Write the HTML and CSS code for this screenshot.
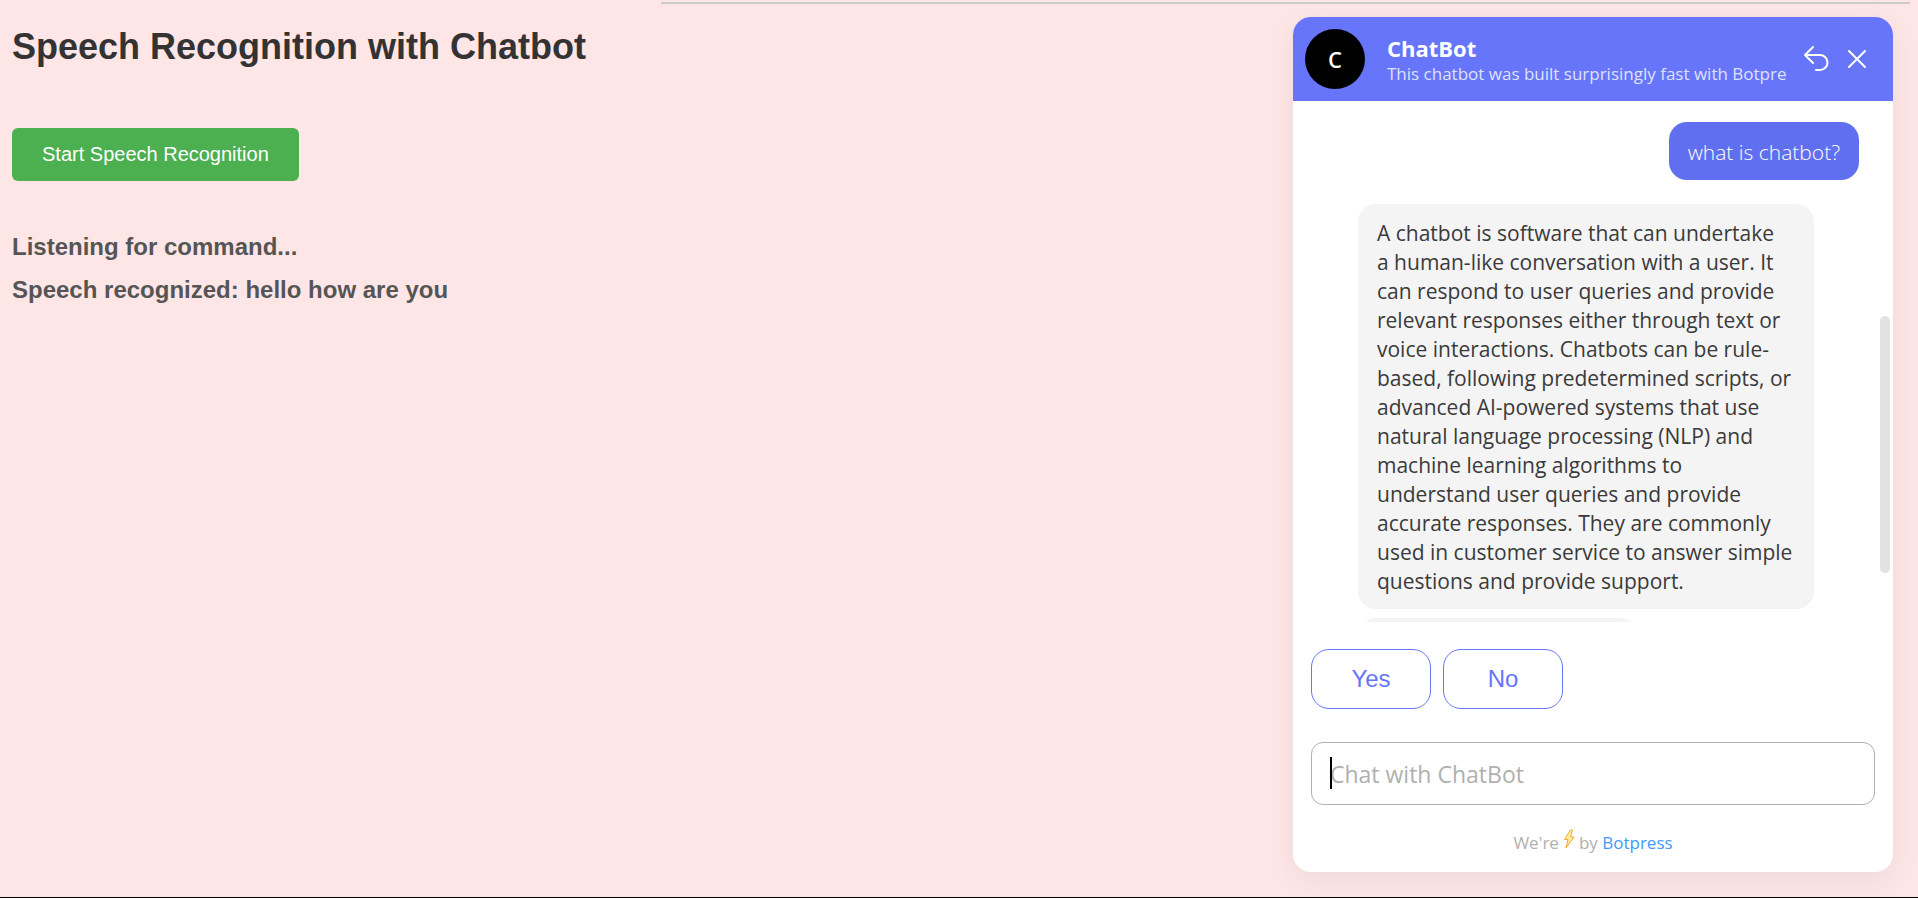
FILE: index.html
```html
<!DOCTYPE html>
<html lang="en">
<head>
<meta charset="utf-8">
<title>Speech Recognition with Chatbot</title>
<link rel="stylesheet" href="styles.css">
</head>
<body>
<div class="page">
  <main class="speech">
    <h1 class="title">Speech Recognition with Chatbot</h1>
    <button class="start" type="button">Start Speech Recognition</button>
    <h3 class="status">Listening for command...</h3>
    <h3 class="status">Speech recognized: hello how are you</h3>
  </main>
  <div class="stage">
    <aside class="chat">
      <header class="chat-header">
        <div class="avatar">C</div>
        <div class="identity">
          <h2 class="name">ChatBot</h2>
          <p class="tagline">This chatbot was built surprisingly fast with Botpre</p>
        </div>
        <button class="icon-button" type="button" aria-label="Restart conversation">
          <svg width="26" height="26" viewBox="0 0 26 26"><path d="M9 1 1 9l8 8M1 9h15a7.500 7.500 0 0 1 0 15h-4"/></svg>
        </button>
        <button class="icon-button" type="button" aria-label="Close">
          <svg width="18" height="18" viewBox="0 0 18 18"><path d="M1 1l16 16M17 1 1 17"/></svg>
        </button>
      </header>
      <div class="messages">
        <p class="bubble user">what is chatbot?</p>
        <div class="replies">
          <p class="bubble bot">A chatbot is software that can undertake<br>a human-like conversation with a user. It<br>can respond to user queries and provide<br>relevant responses either through text or<br>voice interactions. Chatbots can be rule-<br>based, following predetermined scripts, or<br>advanced AI-powered systems that use<br>natural language processing (NLP) and<br>machine learning algorithms to<br>understand user queries and provide<br>accurate responses. They are commonly<br>used in customer service to answer simple<br>questions and provide support.</p>
          <div class="bubble bot next"></div>
        </div>
        <span class="scroll-thumb"></span>
      </div>
      <div class="choices">
        <button class="choice" type="button">Yes</button>
        <button class="choice" type="button">No</button>
      </div>
      <div class="composer">
        <input class="composer-input" type="text" aria-label="Message" placeholder="Chat with ChatBot">
        <span class="caret"></span>
      </div>
      <footer class="credit">
        <span>We're</span>
        <svg class="bolt" width="12" height="20" viewBox="0 0 12 20"><path d="M7.500 1 1.500 10.500h3.500L3 19l8-11H7.500L9.500 1z"/></svg>
        <span>by <a class="credit-link" href="#">Botpress</a></span>
      </footer>
    </aside>
  </div>
</div>
</body>
</html>
```
FILE: styles.css
```css
* { box-sizing: border-box; }

body {
  margin: 0;
  background: #fee6e6;
  font-family: "Liberation Sans", Arial, sans-serif;
}

h1, h2, h3, p { margin: 0; }

button { font-family: inherit; cursor: pointer; }

.page {
  display: flex;
  min-height: 100vh;
  border-bottom: 1px solid #000;
}

.speech {
  width: 661px;
  padding: 26px 12px;
  display: flex;
  flex-direction: column;
  align-items: flex-start;
}

.title {
  margin-bottom: 60px;
  color: #333;
  font-size: 36px;
  line-height: 42px;
}

.start {
  height: 53px;
  margin-bottom: 48px;
  padding: 0 30px;
  border: 0;
  border-radius: 6px;
  background: #4caf50;
  color: #fff;
  font-size: 20px;
}

.status {
  margin-bottom: 7px;
  color: #555;
  font-size: 24px;
  line-height: 36px;
}

.stage {
  flex: 1;
  display: flex;
  justify-content: flex-end;
  margin: 2px 8px 0 0;
  padding: 13px 17px 25px 0;
  border-top: 2px solid #ccc;
}

.chat {
  width: 600px;
  display: flex;
  flex-direction: column;
  overflow: hidden;
  border-radius: 18px;
  background: #fff;
  box-shadow: 0 8px 32px rgba(0, 0, 0, 0.06);
  font-family: "Open Sans", "Noto Sans", sans-serif;
}

.chat-header {
  height: 84px;
  display: flex;
  align-items: center;
  padding: 0 27px 0 12px;
  background: #6675fa;
  color: #fff;
}

.avatar {
  flex: none;
  width: 60px;
  height: 60px;
  margin-right: 22px;
  border-radius: 50%;
  background: #000;
  font-size: 22px;
  font-weight: 600;
  line-height: 60px;
  text-align: center;
}

.identity {
  flex: 1;
  padding-top: 4px;
}

.name {
  font-size: 22px;
  font-weight: 700;
  line-height: 26px;
}

.tagline {
  color: #dfe2fd;
  font-size: 17px;
  line-height: 26px;
  white-space: nowrap;
}

.icon-button {
  flex: none;
  display: flex;
  margin-left: 18px;
  padding: 0;
  border: 0;
  background: none;
}

.icon-button svg, .bolt { display: block; }

.icon-button path {
  fill: none;
  stroke: #fff;
  stroke-width: 2;
  stroke-linecap: round;
  stroke-linejoin: round;
}

.messages {
  position: relative;
  height: 521px;
  display: flex;
  flex-direction: column;
  gap: 24px;
  overflow: hidden;
  padding: 21px 34px 0 65px;
}

.bubble {
  border-radius: 18px;
  padding: 15px 19px 13px;
  font-size: 21px;
  line-height: 29px;
}

.user {
  align-self: flex-end;
  background: #5f6ff0;
  color: #fff;
  font-weight: 300;
  line-height: 30px;
}

.replies {
  display: flex;
  flex-direction: column;
  align-items: flex-start;
  gap: 9px;
}

.bot {
  width: 456px;
  background: #f4f4f4;
  color: #3a3a3a;
  white-space: nowrap;
}

.next {
  width: 280px;
  height: 58px;
}

.scroll-thumb {
  position: absolute;
  top: 215px;
  right: 3px;
  width: 10px;
  height: 257px;
  border-radius: 5px;
  background: #e2e2e2;
}

.choices {
  display: flex;
  gap: 12px;
  margin-top: 27px;
  padding: 0 18px;
}

.choice {
  width: 120px;
  height: 60px;
  padding: 0;
  border: 1px solid #6675fa;
  border-radius: 18px;
  background: #fff;
  color: #6675fa;
  font-family: "Liberation Sans", Arial, sans-serif;
  font-size: 24px;
}

.composer {
  position: relative;
  margin: 33px 18px 0;
}

.composer-input {
  display: block;
  width: 100%;
  height: 63px;
  padding: 0 18px;
  border: 1px solid #b0b0b0;
  border-radius: 12px;
  background: #fff;
  font-family: inherit;
  font-size: 23px;
}

.composer-input::placeholder { color: #b0b0b0; }

.caret {
  position: absolute;
  top: 15px;
  left: 19px;
  width: 2px;
  height: 32px;
  background: #000;
}

.credit {
  display: flex;
  justify-content: center;
  gap: 4px;
  margin-top: 24px;
  color: #b0b0b0;
  font-size: 17px;
  line-height: 28px;
}

.bolt path {
  fill: #fff0a0;
  stroke: #f5a530;
  stroke-width: 1;
  stroke-linejoin: round;
}

.credit-link {
  color: #4299f7;
  text-decoration: none;
}
```
